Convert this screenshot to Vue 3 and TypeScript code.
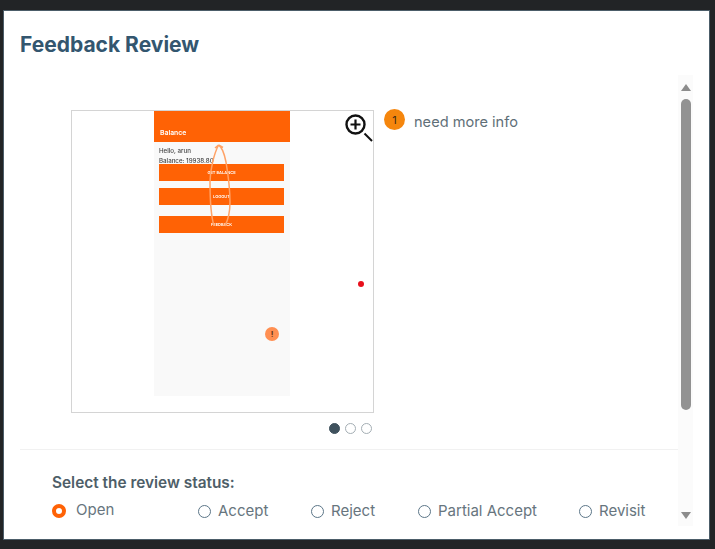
<script setup lang="ts">
const statuses = [
  { label: 'Open', width: 146, checked: true },
  { label: 'Accept', width: 113, checked: false },
  { label: 'Reject', width: 107, checked: false },
  { label: 'Partial Accept', width: 161, checked: false },
  { label: 'Revisit', width: 80, checked: false },
];
const buttons = [
  { label: 'GET BALANCE', gap: 0 },
  { label: 'LOGOUT', gap: 7 },
  { label: 'FEEDBACK', gap: 11 },
];
</script>

<template>
  <div class="frame">
    <section class="modal">
      <h1 class="title">Feedback Review</h1>
      <div class="body">
        <div class="content">
          <div class="review">
            <div class="shot">
              <div class="phone">
                <div class="phone-header">Balance</div>
                <div class="phone-text">Hello, arun<br />Balance: 19938.80</div>
                <div v-for="b in buttons" :key="b.label" class="phone-btn" :style="{ marginTop: b.gap + 'px' }">{{ b.label }}</div>
              </div>
              <!-- Drawn annotation -->
              <svg class="scribble" width="24" height="86" viewBox="0 0 24 86" fill="none">
                <path d="M9.5 1 C5 10 1 26 1 38 C1 54 2 72 5 82 M9.5 1 C13 3 15 8 17 18 C19 30 21 46 21 58 C21 68 19 76 16 82 M9.5 1 L6 4 M9.5 1 L14 3.5" stroke="#ffa266" stroke-width="1.5" />
              </svg>
              <span class="pin">!</span>
              <span class="dot-red"></span>
              <svg class="zoom" width="29" height="30" viewBox="0 0 29 30" fill="none" stroke="#111">
                <circle cx="11.5" cy="11.5" r="9" stroke-width="2.4" />
                <path d="M11.5 6.5v10M6.5 11.5h10" stroke-width="2.2" />
                <path d="M20.5 20.5l7.5 7.5" stroke-width="2" />
              </svg>
            </div>
            <div class="note">
              <span class="badge">1</span>
              <span class="note-text">need more info</span>
            </div>
          </div>
          <div class="pager">
            <span class="page active"></span>
            <span class="page"></span>
            <span class="page"></span>
          </div>
          <div class="status">
            <div class="status-title">Select the review status:</div>
            <div class="options">
              <label v-for="s in statuses" :key="s.label" class="option" :style="{ width: s.width + 'px' }">
                <span class="radio" :class="{ on: s.checked }"></span>
                <span class="option-label" :class="{ first: s.checked }">{{ s.label }}</span>
              </label>
            </div>
          </div>
        </div>
        <div class="scrollbar">
          <span class="arrow up"></span>
          <span class="thumb"></span>
          <span class="arrow down"></span>
        </div>
      </div>
    </section>
  </div>
</template>

<style>
html, body {
  margin: 0;
  background: #222426;
}
</style>

<style scoped>
.frame {
  width: 715px;
  height: 549px;
  box-sizing: border-box;
  padding: 10px 5px 9px 3px;
  overflow: hidden;
  background: #222426;
  font-family: Inter, "Liberation Sans", sans-serif;
}

.modal {
  height: 100%;
  box-sizing: border-box;
  padding: 0 17px 0 16px;
  display: flex;
  flex-direction: column;
  background: #fff;
  border: 1px solid #4c5d69;
}

.title {
  margin: 21px 0 0;
  font-size: 21px;
  line-height: 26px;
  font-weight: 700;
  color: #33566f;
}

.body {
  display: flex;
  margin-top: 17px;
  min-height: 0;
}

.content {
  width: 658px;
  flex: none;
}

.review {
  display: flex;
  padding: 35px 0 0 51px;
}

.shot {
  position: relative;
  width: 301px;
  height: 301px;
  flex: none;
  border: 1px solid #d4d4d4;
  background: #fff;
}

.phone {
  width: 136px;
  height: 285px;
  margin-left: 82px;
  background: #f9f9f9;
  filter: blur(0.5px);
}

.phone-header {
  height: 31px;
  box-sizing: border-box;
  padding: 17px 0 0 6px;
  font-size: 6.8px;
  line-height: 10px;
  font-weight: 600;
  color: #fff;
  background: #ff6205;
}

.phone-text {
  padding: 4px 0 0 5px;
  height: 18px;
  font-size: 6.2px;
  line-height: 9.5px;
  font-weight: 500;
  color: #444;
}

.phone-btn {
  height: 17px;
  margin: 0 6px 0 5px;
  text-align: center;
  font-size: 4px;
  line-height: 17px;
  font-weight: 600;
  color: #fff;
  background: #ff6205;
}

.scribble {
  position: absolute;
  left: 137px;
  top: 33px;
}

.pin {
  position: absolute;
  left: 193px;
  top: 216px;
  width: 14px;
  height: 14px;
  border-radius: 50%;
  text-align: center;
  font-size: 8px;
  line-height: 14px;
  font-weight: 700;
  color: #5c3216;
  background: #ff8f52;
}

.dot-red {
  position: absolute;
  left: 286px;
  top: 170px;
  width: 6px;
  height: 6px;
  border-radius: 50%;
  background: #e8101c;
}

.zoom {
  position: absolute;
  left: 272px;
  top: 2px;
}

.note {
  display: flex;
  align-items: flex-start;
  margin: -1px 0 0 10px;
}

.badge {
  width: 21px;
  height: 21px;
  border-radius: 50%;
  text-align: center;
  font-size: 11px;
  line-height: 23px;
  color: #3b2a14;
  background: #f5860d;
}

.note-text {
  margin: 2px 0 0 9px;
  font-size: 14.6px;
  line-height: 22px;
  color: #5f6f78;
}

.pager {
  display: flex;
  gap: 5px;
  justify-content: flex-end;
  padding: 10px 306px 0 0;
}

.page {
  width: 9px;
  height: 9px;
  border: 1px solid #a4aeb4;
  border-radius: 50%;
}

.page.active {
  background: #3f515d;
  border-color: #3f515d;
}

.status {
  margin-top: 15px;
  border-top: 1px solid #f1f1f1;
  padding: 23px 0 0 32px;
}

.status-title {
  font-size: 15.4px;
  line-height: 20px;
  font-weight: 600;
  color: #4e5e68;
}

.options {
  display: flex;
  margin-top: 7px;
}

.option {
  display: flex;
  align-items: center;
  flex: none;
  gap: 7px;
}

.radio {
  width: 11px;
  height: 11px;
  border: 1.5px solid #5c7688;
  border-radius: 50%;
  flex: none;
}

.radio.on {
  width: 6px;
  height: 6px;
  border: 4px solid #ff6205;
  background: #fff;
}

.option-label {
  font-size: 15px;
  line-height: 22px;
  color: #67757e;
}

.option-label.first {
  margin-left: 3px;
  position: relative;
  top: -1px;
}

.scrollbar {
  width: 15px;
  height: 451px;
  flex: none;
  display: flex;
  flex-direction: column;
  align-items: center;
  background: #fbfbfb;
}

.arrow {
  width: 0;
  height: 0;
  border-left: 5px solid transparent;
  border-right: 5px solid transparent;
}

.arrow.up {
  margin-top: 9px;
  border-bottom: 7px solid #8c8c8c;
}

.arrow.down {
  margin-top: 102px;
  border-top: 7px solid #8c8c8c;
}

.thumb {
  width: 10px;
  height: 311px;
  margin-top: 8px;
  border-radius: 5px;
  background: #929292;
}
</style>
